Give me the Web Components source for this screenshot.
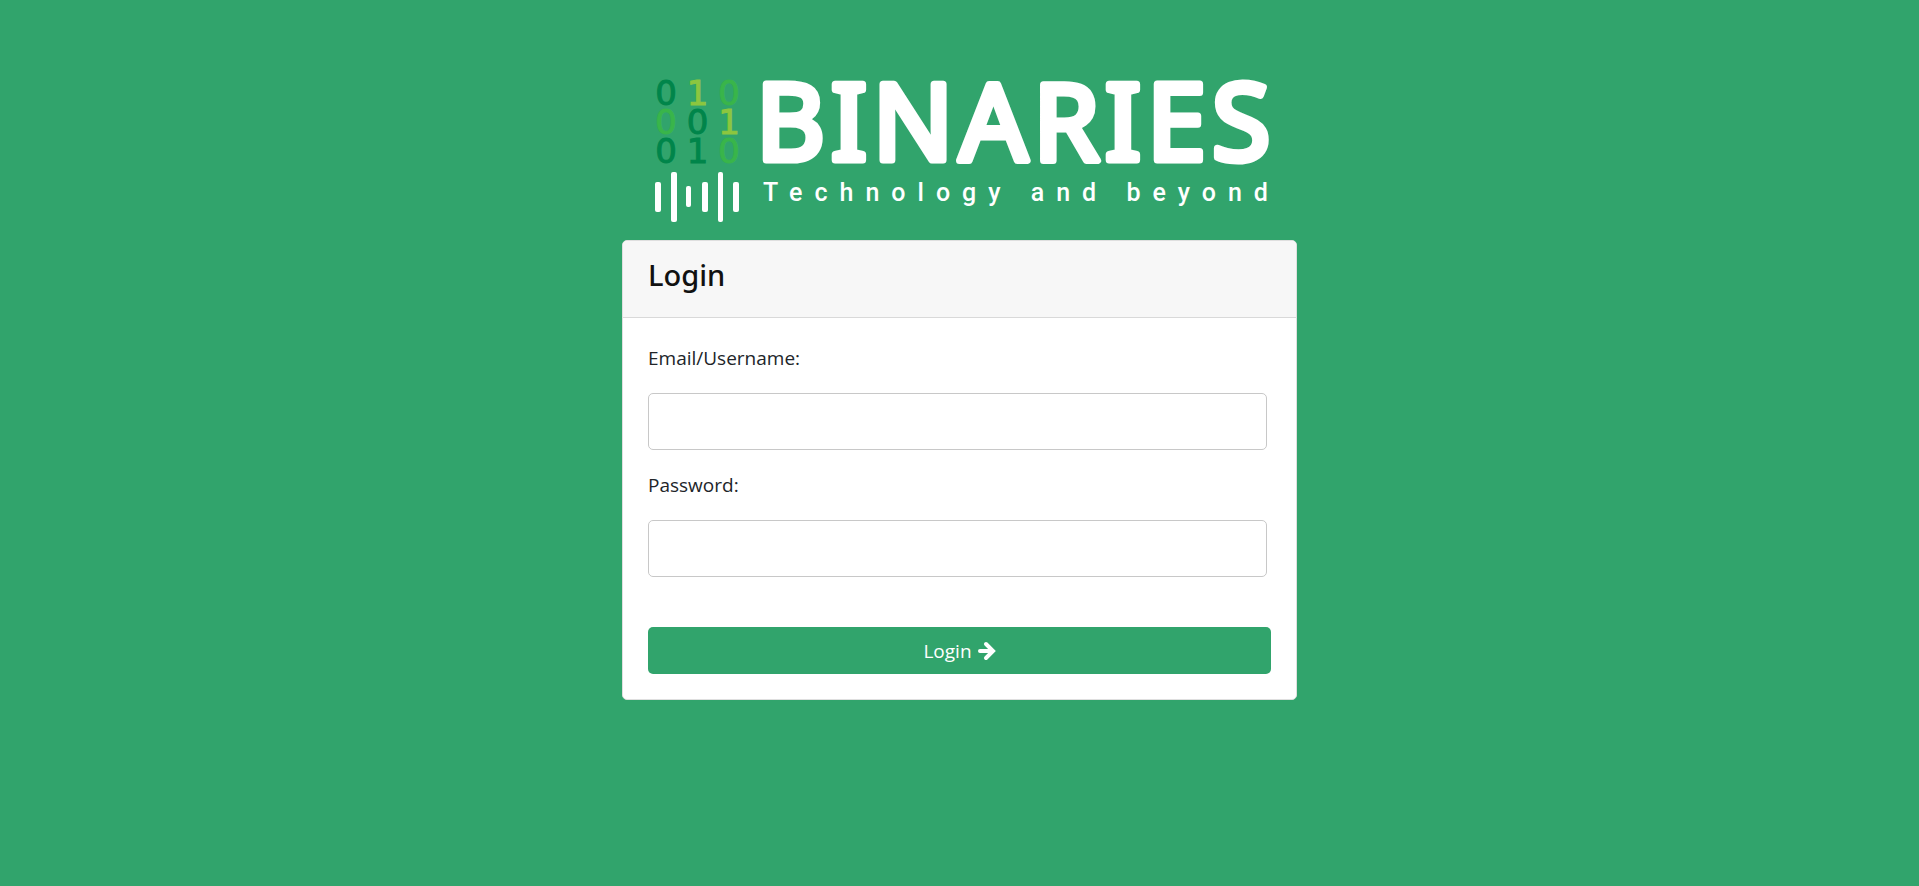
<!DOCTYPE html>
<html lang="en">
<head>
<meta charset="utf-8">
<meta name="viewport" content="width=device-width, initial-scale=1">
<title>Binaries - Login</title>
<style>
  body {
    margin: 0;
    min-height: 100vh;
    background: #31a46c;
    color: #212529;
    font-family: "Open Sans", "Noto Sans", sans-serif;
    font-size: 19px;
    line-height: 30px;
  }
</style>
</head>
<body>
<login-page>
  <brand-logo slot="brand"></brand-logo>
  <login-card heading="Login">
    <text-field label="Email/Username:" type="text" name="username"></text-field>
    <text-field label="Password:" type="password" name="password"></text-field>
    <submit-button slot="action">Login</submit-button>
  </login-card>
</login-page>

<script>
function attach(host, html) {
  const template = document.createElement('template');
  template.innerHTML = html;
  const root = host.attachShadow({ mode: 'open' });
  root.append(template.content.cloneNode(true));
  return root;
}

customElements.define('login-page', class extends HTMLElement {
  constructor() {
    super();
    attach(this, `
      <style>
        :host { display: block; }
        main {
          box-sizing: border-box;
          width: 100%;
          max-width: 675px;
          margin: 0 auto;
          padding-top: 80px;
          display: flex;
          flex-direction: column;
          gap: 18px;
        }
      </style>
      <main><slot name="brand"></slot><slot></slot></main>`);
  }
});

customElements.define('brand-logo', class extends HTMLElement {
  constructor() {
    super();
    attach(this, `
      <style>
        :host { display: flex; gap: 23px; padding: 0 26px 0 33px; color: #fff; }
        .mark { flex: none; width: 85px; display: grid; gap: 5px; }
        .digits {
          display: grid;
          grid-template-columns: 22px 22px 22px;
          justify-content: space-between;
          grid-auto-rows: 29px;
          font: 34px/26px "DejaVu Sans", sans-serif;
          -webkit-text-stroke: 1px currentColor;
        }
        .digits span { display: flex; justify-content: center; }
        .dark { color: #00854a; }
        .mid { color: #39b54a; }
        .lime { color: #8cc63f; }
        svg { display: block; overflow: visible; }
        .words { flex: 1; min-width: 0; }
        .name {
          font: 400 106px "Noto Sans", sans-serif;
          letter-spacing: 6px;
          fill: #fff;
          stroke: #fff;
          stroke-width: 7px;
          stroke-linejoin: round;
        }
        .tagline {
          margin: 0;
          padding-top: 11px;
          font: 500 25px/36px Roboto, sans-serif;
          letter-spacing: 12px;
          white-space: nowrap;
        }
      </style>
      <div class="mark">
        <div class="digits">
          <span class="dark">0</span><span class="lime">1</span><span class="mid">0</span>
          <span class="mid">0</span><span class="dark">0</span><span class="lime">1</span>
          <span class="dark">0</span><span class="dark">1</span><span class="mid">0</span>
        </div>
        <svg width="84" height="50" viewBox="0 0 84 50" fill="currentColor" aria-hidden="true">
          <rect x="0" y="10" width="6" height="30" rx="2"/>
          <rect x="16" y="0" width="6" height="50" rx="2"/>
          <rect x="31" y="14" width="5" height="21" rx="2"/>
          <rect x="47" y="10" width="6" height="30" rx="2"/>
          <rect x="63" y="0" width="5" height="50" rx="2"/>
          <rect x="78" y="10" width="6" height="30" rx="2"/>
        </svg>
      </div>
      <div class="words">
        <svg width="508" height="84" viewBox="0 0 508 84"><text class="name" x="-7" y="80">BINARIES</text></svg>
        <p class="tagline">Technology and beyond</p>
      </div>`);
  }
});

customElements.define('login-card', class extends HTMLElement {
  constructor() {
    super();
    const root = attach(this, `
      <style>
        :host {
          display: block;
          background: #fff;
          border: 1px solid #dfdfdf;
          border-radius: 5px;
          overflow: hidden;
        }
        header { padding: 16px 25px 24px; background: #f7f7f7; border-bottom: 1px solid #d9d9d9; }
        h1 { margin: 0; font: 500 29px/36px "Noto Sans", sans-serif; color: #111; }
        form { padding: 25px; display: grid; gap: 20px; }
        .action { padding-top: 30px; }
      </style>
      <header><h1></h1></header>
      <form>
        <slot></slot>
        <div class="action"><slot name="action"></slot></div>
      </form>`);
    root.querySelector('h1').textContent = this.getAttribute('heading');
  }
});

customElements.define('text-field', class extends HTMLElement {
  constructor() {
    super();
    const root = attach(this, `
      <style>
        :host { display: grid; gap: 20px; }
        input {
          box-sizing: border-box;
          width: calc(100% - 4px);
          height: 57px;
          padding: 8px 16px;
          border: 1px solid #c8c8c8;
          border-radius: 5px;
          background: #fff;
          color: inherit;
          font: inherit;
        }
      </style>
      <label for="field"></label>
      <input id="field">`);
    root.querySelector('label').textContent = this.getAttribute('label');
    const input = root.querySelector('input');
    input.type = this.getAttribute('type');
    input.name = this.getAttribute('name');
  }
});

customElements.define('submit-button', class extends HTMLElement {
  constructor() {
    super();
    attach(this, `
      <style>
        :host { display: block; }
        button {
          width: 100%;
          height: 47px;
          padding: 0;
          display: flex;
          align-items: center;
          justify-content: center;
          gap: 6px;
          border: 0;
          border-radius: 5px;
          background: #31a46c;
          color: #fff;
          font: inherit;
          cursor: pointer;
        }
      </style>
      <button type="submit">
        <slot></slot>
        <svg width="18" height="20" viewBox="0 0 18 20" fill="none" stroke="#fff" stroke-width="4" stroke-linecap="round" stroke-linejoin="miter" aria-hidden="true">
          <path d="M2 10H14M8 3L15 10L8 17"/>
        </svg>
      </button>`);
  }
});
</script>
</body>
</html>
